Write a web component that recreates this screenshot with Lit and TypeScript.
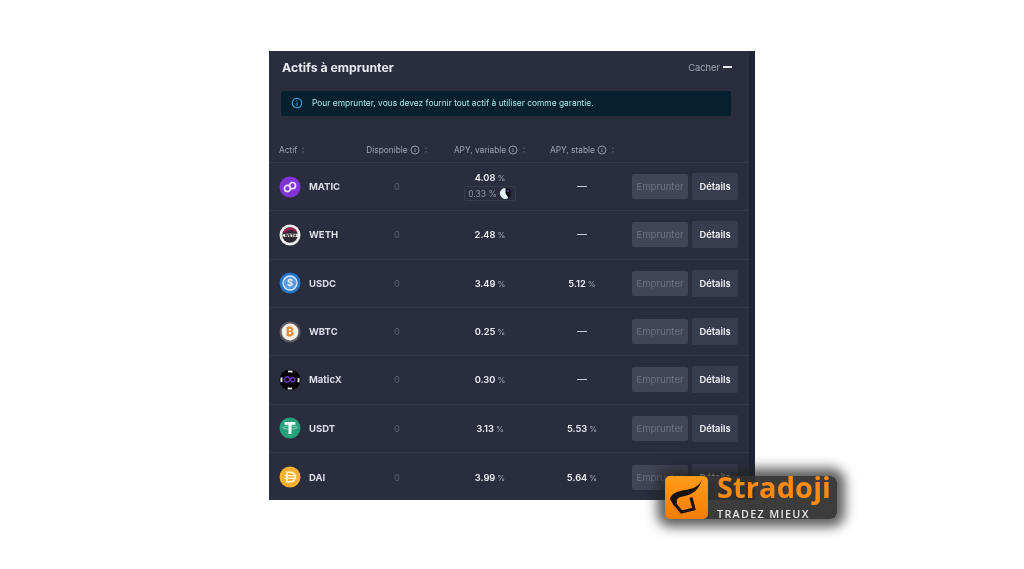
import { LitElement, css, html, svg } from "lit";
import { customElement } from "lit/decorators.js";

const icons: Record<string, unknown> = {
  MATIC: svg`<circle cx="11" cy="11" r="10.5" fill="#8135d6"/>
    <path d="M5.5 12.6c0-1.900 1.400-3.300 3-3.300s2.900 1.400 2.900 3.100-1.300 3.200-3 3.200-2.900-1.300-2.900-3zM10.600 9.500c0-1.700 1.300-3 2.900-3s3 1.400 3 3.100-1.300 3.100-3 3.100-2.900-1.400-2.900-3.200z" fill="none" stroke="#f1e6fb" stroke-width="1.700"/>`,
  WETH: svg`<circle cx="11" cy="11" r="10.500" fill="#efeeee"/>
    <circle cx="11" cy="11" r="7.800" fill="#2b2730"/>
    <path d="M4.500 8a7.500 7.500 0 0 1 13-1.500l-1.800 1.500A5.500 5.500 0 0 0 6.500 9z" fill="#a11f4d"/>
    <path d="M3.400 11.500c0-1.500 2-1.800 7.600-1.800h7.800v3.400H5z" fill="#efeeee"/>
    <text x="11.500" y="12.800" font-size="3.800" font-weight="800" text-anchor="middle" fill="#222" font-family="Inter, sans-serif">WETH</text>`,
  USDC: svg`<circle cx="11" cy="11" r="10.500" fill="#2775ca"/>
    <circle cx="11" cy="11" r="7" fill="#9fc6ec" fill-opacity=".45" stroke="#dcecfb" stroke-width="1.300"/>
    <text x="11" y="14.400" font-size="9.500" font-weight="600" text-anchor="middle" fill="#eef6fd" font-family="Inter, sans-serif">$</text>`,
  WBTC: svg`<circle cx="11" cy="11" r="10.500" fill="#5f5c64"/>
    <circle cx="11" cy="11" r="8.400" fill="#f3efe9"/>
    <text x="11" y="15.200" font-size="12" font-weight="800" text-anchor="middle" fill="#e0892e" font-family="Inter, sans-serif">₿</text>`,
  MaticX: svg`<circle cx="11" cy="11" r="10.500" fill="#050308"/>
    <circle cx="11" cy="11" r="8.600" fill="none" stroke="#ededed" stroke-width="1.900" stroke-dasharray="4.500 9" stroke-dashoffset="2.200"/>
    <path d="M6.600 8.600a2.200 2.200 0 0 1 3.100-.2l3 4.200a2.200 2.200 0 1 0 .2-3.900l-3.200 4a2.200 2.200 0 1 1-3.100-4.100z" fill="none" stroke="#6c35b4" stroke-width="1.500"/>`,
  USDT: svg`<circle cx="11" cy="11" r="10.500" fill="#26a17b"/>
    <ellipse cx="11" cy="10.600" rx="7" ry="1.600" fill="none" stroke="#9ad9c4" stroke-width=".8"/>
    <path d="M5.600 5h10.800v2.700h-3.900V17h-3V7.700H5.600z" fill="#f4fbf8"/>`,
  DAI: svg`<circle cx="11" cy="11" r="10.500" fill="#f6b02f"/>
    <path d="M8 6.300h3.300c3 0 4.700 2 4.700 4.700s-1.700 4.700-4.700 4.700H8z" fill="none" stroke="#fff6df" stroke-width="1.600"/>
    <path d="M5.600 9.700h11.800M5.600 12.300h11.800" stroke="#fff6df" stroke-width="1.300"/>`,
};

const rows = [
  { name: "MATIC", variable: "4.08", stable: "", extra: true },
  { name: "WETH", variable: "2.48", stable: "" },
  { name: "USDC", variable: "3.49", stable: "5.12" },
  { name: "WBTC", variable: "0.25", stable: "" },
  { name: "MaticX", variable: "0.30", stable: "" },
  { name: "USDT", variable: "3.13", stable: "5.53" },
  { name: "DAI", variable: "3.99", stable: "5.64" },
];

const info = html`<svg class="info" viewBox="0 0 10 10"><circle cx="5" cy="5" r="4" fill="none" stroke="currentColor" stroke-width=".9"/><path d="M5 4.500v2.500M5 3v.8" stroke="currentColor" stroke-width=".9"/></svg>`;
const sort = html`<svg class="sort" viewBox="0 0 4 8"><path d="M2 .8 3.400 3H.6zM2 7.200.6 5h2.800z" fill="currentColor"/></svg>`;

@customElement("app-root")
export class AppRoot extends LitElement {
  static styles = css`
    :host {
      display: block;
      position: relative;
      width: 1024px;
      height: 569px;
      background: #fff;
      overflow: hidden;
      font-family: Inter, "Liberation Sans", sans-serif;
    }
    .panel {
      box-sizing: border-box;
      width: 486px;
      height: 449px;
      margin-left: 269px;
      position: relative;
      top: 51px;
      background: #292d3e;
      border-right: 6px solid #1f2333;
      filter: blur(0.5px);
      overflow: hidden;
    }
    .head {
      display: flex;
      justify-content: space-between;
      align-items: center;
      height: 34px;
      padding: 0 17px 2px 13px;
      box-sizing: border-box;
    }
    .title {
      color: #e9eaef;
      font-size: 12.300px;
      font-weight: 700;
    }
    .hide {
      display: flex;
      align-items: center;
      gap: 3px;
      color: #a5a8b4;
      font-size: 9.300px;
    }
    .hide i {
      width: 9px;
      height: 1.500px;
      background: #e4e5ea;
    }
    .alert {
      display: flex;
      align-items: center;
      gap: 9px;
      height: 25px;
      margin: 6px 18px 0 12px;
      padding: 0 0 2px 10px;
      box-sizing: border-box;
      background: #07202f;
      border-radius: 2px;
      color: #a6e6ee;
      font-size: 8.400px;
    }
    .alert svg {
      width: 12px;
      height: 12px;
      color: #2ea8dc;
    }
    .labels,
    .row {
      display: grid;
      grid-template-columns: 73px 90px 96px 88px 1fr;
      padding-left: 10px;
      align-items: center;
    }
    .labels {
      height: 47px;
      box-sizing: border-box;
      align-items: end;
      padding-bottom: 6px;
      color: #a0a3b0;
      font-size: 8.300px;
      border-bottom: 1px solid #343849;
    }
    .labels > div {
      display: flex;
      justify-content: center;
      align-items: center;
      gap: 2px;
      height: 12px;
    }
    .labels > div:first-child {
      justify-content: flex-start;
    }
    .labels > div:nth-child(4) {
      justify-content: flex-start;
      padding-left: 12px;
    }
    .info {
      width: 10px;
      height: 10px;
    }
    .sort {
      width: 4px;
      height: 8px;
      margin-left: 2px;
      color: #4a4e60;
    }
    .row {
      height: 48.330px;
      box-sizing: border-box;
      border-bottom: 1px solid #343849;
    }
    .row:last-child {
      border-bottom: none;
    }
    .asset {
      display: flex;
      align-items: center;
      gap: 8px;
      color: #dcdee6;
      font-size: 9.500px;
      font-weight: 700;
    }
    .asset svg {
      width: 22px;
      height: 22px;
    }
    .cell {
      display: flex;
      flex-direction: column;
      align-items: center;
      color: #eceef2;
      font-size: 9.300px;
      font-weight: 600;
    }
    .zero {
      color: #5d6172;
      font-weight: 400;
    }
    .unit {
      color: #a0a3b0;
      font-size: 8px;
      font-weight: 400;
      margin-left: 2px;
    }
    .dash {
      width: 10px;
      height: 1px;
      background: #c9cbd3;
    }
    .incentive {
      display: flex;
      align-items: center;
      gap: 2px;
      margin-top: 3px;
      padding: 0 3px;
      height: 13px;
      border: 1px solid #353a4d;
      border-radius: 2px;
      color: #8e92a2;
      font-size: 8.500px;
      font-weight: 400;
    }
    .incentive svg {
      width: 13px;
      height: 13px;
    }
    .actions {
      display: flex;
      align-items: center;
      gap: 4px;
      margin-left: 6px;
    }
    .btn {
      display: flex;
      align-items: center;
      justify-content: center;
      border-radius: 2px;
    }
    .btn.off {
      width: 56px;
      height: 25px;
      background: #414555;
      color: #6e7181;
      font-size: 9.600px;
    }
    .btn.on {
      width: 46px;
      height: 27px;
      background: #383c4f;
      color: #f0f1f4;
      font-size: 9.400px;
      font-weight: 600;
    }
    .logo {
      position: absolute;
      left: 665px;
      top: 476px;
      width: 172px;
      height: 43px;
      display: flex;
      gap: 9px;
      background: rgba(50, 50, 50, 0.95);
      border-radius: 6px;
      box-shadow: 0 0 12px 8px rgba(35, 35, 35, 0.72);
      filter: blur(0.4px);
    }
    .mark {
      width: 43px;
      height: 43px;
      border-radius: 5px;
      background: linear-gradient(180deg, #ff9c1a, #f57c05);
      flex: none;
    }
    .brand {
      display: flex;
      flex-direction: column;
      font-family: "Open Sans", sans-serif;
      min-width: 0;
    }
    .brand b {
      color: #fb8a10;
      font-size: 29px;
      line-height: 28px;
      font-weight: 700;
      margin-top: -3px;
      letter-spacing: 0.100px;
    }
    .brand span {
      color: #e6e6e6;
      font-size: 10.800px;
      font-weight: 600;
      letter-spacing: 1.300px;
      margin-top: 5px;
      white-space: nowrap;
    }
  `;

  render() {
    return html`
      <div class="panel">
        <div class="head">
          <div class="title">Actifs à emprunter</div>
          <div class="hide">Cacher <i></i></div>
        </div>
        <div class="alert">
          ${info}
          <span>Pour emprunter, vous devez fournir tout actif à utiliser comme garantie.</span>
        </div>
        <div class="labels">
          <div>Actif ${sort}</div>
          <div>Disponible ${info} ${sort}</div>
          <div>APY, variable ${info} ${sort}</div>
          <div>APY, stable ${info} ${sort}</div>
        </div>
        ${rows.map((r) => this.renderRow(r))}
      </div>
      <div class="logo">
        <div class="mark">
          <svg viewBox="0 0 43 43" width="43" height="43">
            <path d="M37 3C35 10 28 13 20 14C12 15 6 18 5 23L9 30L12 27C11 23 13 21 20 20C29 18 35 12 37 3z" fill="#17120c"/>
            <path d="M9 27L16.500 36L29 33L26 21.500" fill="none" stroke="#17120c" stroke-width="3"/>
          </svg>
        </div>
        <div class="brand">
          <b>Stradoji</b>
          <span>TRADEZ MIEUX</span>
        </div>
      </div>
    `;
  }

  renderRow(r: { name: string; variable: string; stable: string; extra?: boolean }) {
    return html`
      <div class="row">
        <div class="asset">
          <svg viewBox="0 0 22 22">${icons[r.name]}</svg>
          ${r.name}
        </div>
        <div class="cell zero">0</div>
        <div class="cell">
          <div>${r.variable}<span class="unit">%</span></div>
          ${r.extra
            ? html`<div class="incentive">
                0.33 %
                <svg viewBox="0 0 13 13">
                  <circle cx="6.500" cy="6.500" r="5.500" fill="#0b0a14" />
                  <path d="M6.500 1a5.500 5.500 0 1 0 3 10L6.500 6.500z" fill="#e6f3fb" />
                  <circle cx="9" cy="4" r="1" fill="#6b3cc0" />
                </svg>
              </div>`
            : ""}
        </div>
        <div class="cell">
          ${r.stable
            ? html`<div>${r.stable}<span class="unit">%</span></div>`
            : html`<div class="dash"></div>`}
        </div>
        <div class="actions">
          <div class="btn off">Emprunter</div>
          <div class="btn on">Détails</div>
        </div>
      </div>
    `;
  }
}
